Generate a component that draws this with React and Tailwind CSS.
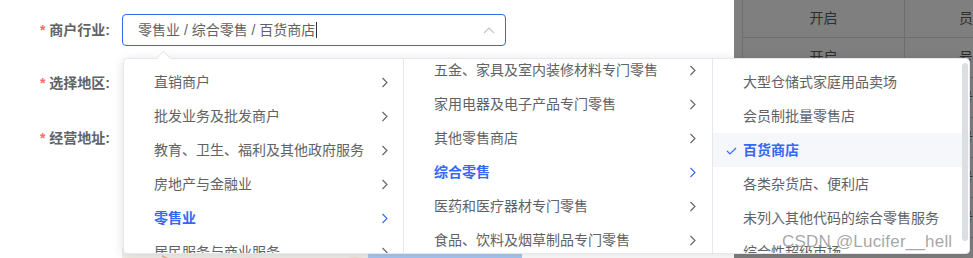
import React from "react";

const font = { fontFamily: '"Liberation Sans", "Noto Sans CJK SC", sans-serif' };

function Chevron({ active }) {
  return (
    <svg width="8" height="11" viewBox="0 0 8 11" className="shrink-0">
      <path
        d="M1.5 1 L6 5.5 L1.5 10"
        fill="none"
        stroke={active ? "#3468f5" : "#606266"}
        strokeWidth="1.1"
      />
    </svg>
  );
}

function Check() {
  return (
    <svg width="11" height="8" viewBox="0 0 11 8" className="absolute left-[13px] top-[14px]">
      <path d="M1 4 L4 7 L10 1" fill="none" stroke="#3468f5" strokeWidth="1.2" />
    </svg>
  );
}

function Node({ label, active, arrow = true, checked, pr = "pr-[14px]" }) {
  return (
    <div
      className={`relative flex h-[34px] items-center justify-between pl-[30px] ${pr} text-[14px] ${
        active ? "font-bold text-[#3468f5]" : "text-[#606266]"
      } ${checked ? "bg-[#f5f7fa]" : ""}`}
    >
      {checked && <Check />}
      <span className="whitespace-nowrap">{label}</span>
      {arrow && <Chevron active={active} />}
    </div>
  );
}

const col1 = ["直销商户", "批发业务及批发商户", "教育、卫生、福利及其他政府服务", "房地产与金融业", "零售业", "居民服务与商业服务"];
const col2 = ["五金、家具及室内装修材料专门零售", "家用电器及电子产品专门零售", "其他零售商店", "综合零售", "医药和医疗器材专门零售", "食品、饮料及烟草制品专门零售"];
const col3 = ["大型仓储式家庭用品卖场", "会员制批量零售店", "百货商店", "各类杂货店、便利店", "未列入其他代码的综合零售服务", "综合性超级市场"];

function Label({ text }) {
  return (
    <div className="flex h-8 w-[122px] items-center justify-end pr-[12px] text-[14px] font-bold text-[#606266]">
      <span className="mr-[4px] text-[#f56c6c]">*</span>
      {text}
    </div>
  );
}

export default function App() {
  return (
    <div className="relative flex h-[258px] w-[973px] overflow-hidden bg-white" style={font}>
      {/* form area */}
      <div className="flex w-[737px] flex-col pt-[14px]">
        <div className="flex">
          <Label text="商户行业:" />
          <div className="flex h-8 w-[384px] items-center justify-between rounded-[4px] border border-[#3468f5] pl-[15px] pr-[10px] text-[14px] text-[#606266]">
            <span className="flex items-center">
              零售业 / 综合零售 / 百货商店
              <span className="ml-[1px] inline-block h-[16px] w-px bg-[#303133]" />
            </span>
            <svg width="12" height="7" viewBox="0 0 12 7">
              <path d="M1 6 L6 1 L11 6" fill="none" stroke="#c0c4cc" strokeWidth="1.1" />
            </svg>
          </div>
        </div>
        <div className="mt-[21px] flex">
          <Label text="选择地区:" />
        </div>
        <div className="mt-[23px] flex">
          <Label text="经营地址:" />
        </div>
        <div className="ml-[122px] mt-[94px] h-[20px] w-[400px] bg-[#f2efe9]">
          <svg width="400" height="20" viewBox="0 0 400 20">
            <rect x="246" y="0" width="154" height="20" fill="#a9c8f5" />
            <path d="M40 8 Q48 11 55 18" stroke="#e9b08a" strokeWidth="1.5" fill="none" />
            <path d="M100 12 Q125 9 150 12" stroke="#e6c3bc" strokeWidth="1.5" fill="none" />
            <path d="M195 16 Q215 10 240 11" stroke="#f0b07e" strokeWidth="2" fill="none" />
          </svg>
        </div>
      </div>

      {/* dimmed table behind */}
      <div className="flex-1 bg-[#7f7f7f] text-[14px] text-[#2e2e2e]">
        <div className="ml-[8px] border-l border-[#6e6e6e]">
          {[0, 1, 2, 3, 4, 5].map((i) => (
            <div
              key={i}
              className={`flex border-b border-[#6e6e6e] ${i === 0 ? "h-[38px]" : "h-[40px]"}`}
            >
              <div className="flex w-[162px] items-center justify-center border-r border-[#6e6e6e]">开启</div>
              <div className="flex flex-1 items-center pl-[54px]">{i === 0 ? "员" : "号"}</div>
            </div>
          ))}
        </div>
      </div>

      {/* cascader dropdown */}
      <div className="absolute left-[123px] top-[58px] flex h-[196px] w-[847px] rounded-[4px] border border-[#e4e7ed] bg-white shadow-[0_2px_12px_rgba(0,0,0,0.12)]">
        <div className="absolute -top-[6px] left-[34px] h-[11px] w-[11px] rotate-45 border-l border-t border-[#e4e7ed] bg-white" />
        <div className="w-[280px] overflow-hidden border-r border-[#e4e7ed] pt-[6px]">
          {col1.map((t) => (
            <Node key={t} label={t} active={t === "零售业"} />
          ))}
        </div>
        <div className="w-[309px] overflow-hidden border-r border-[#e4e7ed]">
          <div className="-mt-[6px]">
            {col2.map((t) => (
              <Node key={t} label={t} active={t === "综合零售"} pr="pr-[15px]" />
            ))}
          </div>
        </div>
        <div className="relative flex-1 overflow-hidden pt-[6px]">
          {col3.map((t) => (
            <Node key={t} label={t} arrow={false} active={t === "百货商店"} checked={t === "百货商店"} />
          ))}
          <div className="absolute right-[1px] top-[4px] h-[178px] w-[6px] rounded-full bg-[#dddee1]" />
        </div>
      </div>

      {/* watermark */}
      <div className="absolute left-[782px] top-[229px] text-[17px] tracking-[0.2px] text-[rgba(150,150,150,0.85)]">
        CSDN @Lucifer__hell
      </div>
    </div>
  );
}
